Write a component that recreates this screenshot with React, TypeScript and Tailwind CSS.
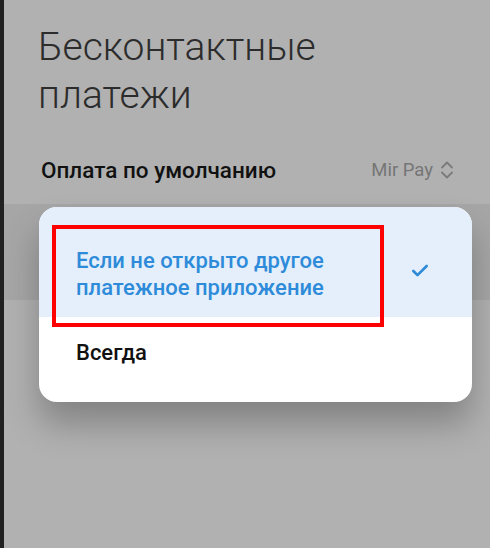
import { Check } from "lucide-react";

function UpDown() {
  return (
    <svg width="14" height="20" viewBox="0 0 14 20" fill="none" stroke="#7a7a7a" strokeWidth="1.8" strokeLinecap="round" strokeLinejoin="round">
      <path d="M2 7.5 L7 2.5 L12 7.5" />
      <path d="M2 12.5 L7 17.5 L12 12.5" />
    </svg>
  );
}

export default function App() {
  return (
    <div
      className="relative flex h-[548px] w-[490px] overflow-hidden bg-[#b1b1b1]"
      style={{ fontFamily: "Roboto, 'Noto Sans', sans-serif" }}
    >
      <div className="w-[4px] shrink-0 bg-[#212121]" />

      <div className="flex-1">
        <h1 className="pl-[34px] pt-[23px] text-[39px] font-light leading-[48px] text-[#2c2c2c]">
          Бесконтактные
          <br />
          платежи
        </h1>

        <div className="mt-[38px] flex h-[26px] items-center justify-between pl-[37px] pr-[36px]">
          <span className="text-[22.5px] font-medium leading-[26px] text-[#111]">Оплата по умолчанию</span>
          <span className="flex items-center gap-[7px] text-[18.5px] leading-[26px] text-[#767676]">
            Mir Pay
            <UpDown />
          </span>
        </div>

        <div className="mt-[21px] h-[96px] bg-[#a6a6a6]" />
      </div>

      {/* dialog */}
      <div className="absolute left-[39px] top-[207px] w-[433px] overflow-hidden rounded-[18px] bg-white shadow-[0_22px_34px_rgba(0,0,0,0.26)]">
        <div className="flex h-[110px] items-start justify-between bg-[#e4effb] pl-[37px] pr-[42px] pt-[40px]">
          <div className="text-[22px] font-medium leading-[27px] text-[#2e8bd9]">
            Если не открыто другое
            <br />
            платежное приложение
          </div>
          <Check className="mt-[14px] h-[20px] w-[20px] text-[#2e8bd9]" strokeWidth={3.2} />
        </div>
        <div className="h-[85px] pl-[37px] pt-[23px] text-[22px] font-medium leading-[26px] text-[#111]">
          Всегда
        </div>

        <div className="absolute left-[13px] top-[18px] h-[102px] w-[332px] border-[4px] border-[#ff0000]" />
      </div>
    </div>
  );
}
